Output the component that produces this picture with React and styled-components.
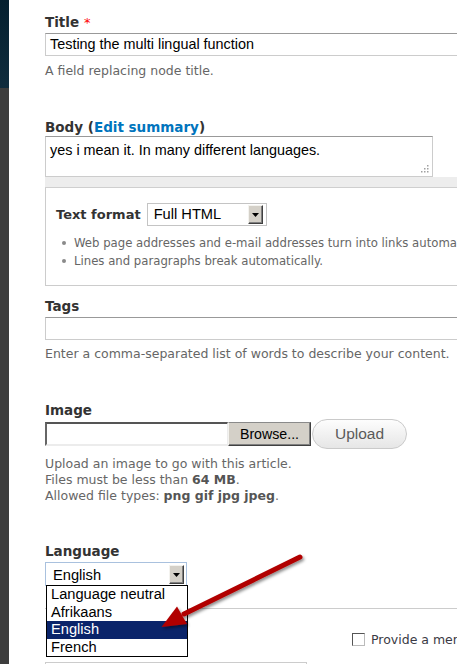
import React from 'react';
import styled, { createGlobalStyle } from 'styled-components';

const GlobalStyle = createGlobalStyle`
  html, body {
    margin: 0;
    padding: 0;
    overflow: hidden;
    background: #fff;
  }
  * { box-sizing: border-box; }
`;

const Page = styled.div`
  position: relative;
  display: flex;
  width: 457px;
  height: 664px;
  overflow: hidden;
  background: #fff;
  font-family: "DejaVu Sans", Verdana, sans-serif;
  color: #333;
`;

const SideBar = styled.div`
  width: 9px;
  flex: none;
  background: linear-gradient(#05202f, #102c3d 88px, #3d3d3d 88px);
`;

const Main = styled.div`
  flex: 1;
  min-width: 0;
  padding-left: 36px;
  overflow: hidden;
`;

const FormItem = styled.div`
  position: relative;
  margin-top: ${(p) => p.$top}px;
`;

const Label = styled.div`
  font-weight: bold;
  font-size: 13.5px;
  line-height: 16px;
  color: #333;
  margin-bottom: ${(p) => p.$gap}px;
  a { color: #0074bd; text-decoration: none; }
`;

const Required = styled.span`
  color: #f00;
  font-weight: normal;
  font-size: 13px;
  margin-left: 5px;
`;

const TextInput = styled.div`
  width: 440px;
  height: 23px;
  padding: 0 4px;
  border: 1px solid #ccc;
  border-top-color: #999;
  font-family: "Liberation Sans", Arial, sans-serif;
  font-size: 14.4px;
  line-height: 21px;
  color: #000;
  white-space: nowrap;
`;

const TextArea = styled.div`
  position: relative;
  width: 388px;
  height: 41px;
  padding: 4px 4px;
  border: 1px solid #ccc;
  border-top-color: #999;
  font-family: "Liberation Sans", Arial, sans-serif;
  font-size: 14.4px;
  line-height: 18px;
  color: #000;
`;

const Grip = styled.svg`
  position: absolute;
  right: 3px;
  bottom: 3px;
`;

const GrayBar = styled.div`
  width: 440px;
  height: 11px;
  background: #ededed;
  border-bottom: 1px solid #cfcfcf;
`;

const FilterBox = styled.div`
  width: 440px;
  padding: 15px 10px 15px 10px;
  border: 1px solid #ccc;
  border-top: none;
`;

const FormatRow = styled.div`
  display: flex;
  align-items: center;
  gap: 6px;
  height: 23px;
`;

const SmallLabel = styled.span`
  font-weight: bold;
  font-size: 13px;
  color: #333;
`;

const Select = styled.div`
  position: relative;
  display: flex;
  align-items: flex-start;
  width: ${(p) => p.$width}px;
  height: ${(p) => p.$height}px;
  border: 1px solid ${(p) => p.$border};
  background: #fff;
  padding: ${(p) => p.$pad};
  font-family: "Liberation Sans", Arial, sans-serif;
  font-size: 14.67px;
  color: #000;
`;

const SelectValue = styled.div`
  flex: 1;
  padding-left: ${(p) => p.$indent}px;
  line-height: ${(p) => p.$line}px;
  white-space: nowrap;
`;

const DropButton = styled.div`
  width: 15px;
  height: 19px;
  flex: none;
  display: flex;
  align-items: center;
  justify-content: center;
  background: #d4d0c8;
  border: 1px solid;
  border-color: #f4f3ef #404040 #404040 #f4f3ef;
  box-shadow: inset -1px -1px 0 #808080;
`;

const Guidelines = styled.ul`
  list-style: none;
  margin: 8px 0 0 0;
  padding: 0;
  font-size: 11.7px;
  line-height: 18px;
  color: #666;
  white-space: nowrap;
`;

const Guideline = styled.li`
  position: relative;
  padding-left: 18px;
  &::before {
    content: '';
    position: absolute;
    left: 6px;
    top: 7px;
    width: 4px;
    height: 4px;
    border-radius: 50%;
    background: #8a8a8a;
  }
`;

const Description = styled.div`
  margin-top: ${(p) => p.$top}px;
  font-size: 12.5px;
  line-height: 16px;
  color: #666;
  white-space: nowrap;
  b { color: #555; }
`;

const UploadRow = styled.div`
  display: flex;
  align-items: center;
  height: 30px;
  margin-top: 1px;
`;

const FileBox = styled.div`
  width: 183px;
  height: 24px;
  border-top: 2px solid #555;
  border-left: 2px solid #666;
  border-bottom: 2px solid #ececec;
  border-right: 1px solid #ececec;
  background: #fff;
`;

const BrowseButton = styled.div`
  width: 83px;
  height: 24px;
  display: flex;
  align-items: center;
  justify-content: center;
  background: #d4d0c8;
  border: 1px solid;
  border-color: #8a8a8a #404040 #404040 #f4f3ef;
  box-shadow: inset -1px -1px 0 #808080;
  font-family: "Liberation Sans", Arial, sans-serif;
  font-size: 14.2px;
  color: #000;
`;

const UploadButton = styled.div`
  width: 95px;
  height: 30px;
  margin-left: 1px;
  display: flex;
  align-items: center;
  justify-content: center;
  border: 1px solid #cacaca;
  border-radius: 15px;
  background: linear-gradient(#fdfdfd, #e6e6e6);
  font-family: "Liberation Sans", Arial, sans-serif;
  font-size: 15.5px;
  color: #5a5a5a;
`;

const OptionList = styled.div`
  position: absolute;
  left: 0;
  top: 100%;
  z-index: 2;
  width: 142px;
  border: 1px solid #000;
  background: #fff;
  font-family: "Liberation Sans", Arial, sans-serif;
  font-size: 14.67px;
  color: #000;
`;

const Option = styled.div`
  height: 17.5px;
  line-height: 17.5px;
  padding-left: 4px;
  white-space: nowrap;
  background: ${(p) => (p.$active ? '#0a246a' : 'transparent')};
  color: ${(p) => (p.$active ? '#fff' : '#000')};
`;

const BottomSection = styled.div`
  margin-top: 22px;
  width: 440px;
  height: 80px;
  border-top: 1px solid #ccc;
  display: grid;
  grid-template-columns: 262px 1fr;
  column-gap: 45px;
  align-items: start;
`;

const TabsBox = styled.div`
  margin-top: 53px;
  height: 30px;
  border: 1px solid #ccc;
  border-bottom: none;
`;

const CheckRow = styled.div`
  margin-top: 23px;
  display: flex;
  align-items: center;
  gap: 6px;
  font-size: 12.5px;
  color: #3a3a44;
  white-space: nowrap;
`;

const CheckBox = styled.div`
  width: 13px;
  height: 13px;
  flex: none;
  border: 1px solid #555;
  border-right-color: #bbb;
  border-bottom-color: #bbb;
  background: #fff;
`;

const ArrowLayer = styled.svg`
  position: absolute;
  left: 0;
  top: 0;
  pointer-events: none;
  z-index: 5;
`;

function DropArrow() {
  return (
    <svg width="7" height="4" viewBox="0 0 7 4">
      <path d="M0 0 H7 L3.5 4 Z" fill="#000" />
    </svg>
  );
}

export default function App() {
  return (
    <>
      <GlobalStyle />
      <Page>
        <SideBar />
        <Main>
          <FormItem $top={14}>
            <Label $gap={2}>Title<Required>*</Required></Label>
            <TextInput>Testing the multi lingual function</TextInput>
            <Description $top={7}>A field replacing node title.</Description>
          </FormItem>

          <FormItem $top={40}>
            <Label $gap={1}>Body (<a href="#">Edit summary</a>)</Label>
            <TextArea>
              yes i mean it. In many different languages.
              <Grip width="9" height="9" viewBox="0 0 9 9">
                <g fill="#a0a0a0">
                  <rect x="7" y="1" width="1.5" height="1.5" />
                  <rect x="4" y="4" width="1.5" height="1.5" />
                  <rect x="7" y="4" width="1.5" height="1.5" />
                  <rect x="1" y="7" width="1.5" height="1.5" />
                  <rect x="4" y="7" width="1.5" height="1.5" />
                  <rect x="7" y="7" width="1.5" height="1.5" />
                </g>
              </Grip>
            </TextArea>
            <GrayBar />
            <FilterBox>
              <FormatRow>
                <SmallLabel>Text format</SmallLabel>
                <Select $width={120} $height={23} $border="#c4c4c4" $pad="1px 3px 0 0">
                  <SelectValue $indent={6} $line={19}>Full HTML</SelectValue>
                  <DropButton><DropArrow /></DropButton>
                </Select>
              </FormatRow>
              <Guidelines>
                <Guideline>Web page addresses and e-mail addresses turn into links automatically.</Guideline>
                <Guideline>Lines and paragraphs break automatically.</Guideline>
              </Guidelines>
            </FilterBox>
          </FormItem>

          <FormItem $top={12}>
            <Label $gap={3}>Tags</Label>
            <TextInput />
            <Description $top={6}>Enter a comma-separated list of words to describe your content.</Description>
          </FormItem>

          <FormItem $top={40}>
            <Label $gap={0}>Image</Label>
            <UploadRow>
              <FileBox />
              <BrowseButton>Browse...</BrowseButton>
              <UploadButton>Upload</UploadButton>
            </UploadRow>
            <Description $top={7}>
              Upload an image to go with this article.<br />
              Files must be less than <b>64 MB</b>.<br />
              Allowed file types: <b>png gif jpg jpeg</b>.
            </Description>
          </FormItem>

          <FormItem $top={39}>
            <Label $gap={3}>Language</Label>
            <Select $width={142} $height={24} $border="#a9c1de" $pad="2px 2px 0 0">
              <SelectValue $indent={7} $line={20}>English</SelectValue>
              <DropButton><DropArrow /></DropButton>
              <OptionList>
                <Option>Language neutral</Option>
                <Option>Afrikaans</Option>
                <Option $active>English</Option>
                <Option>French</Option>
              </OptionList>
            </Select>
          </FormItem>

          <BottomSection>
            <TabsBox />
            <CheckRow>
              <CheckBox />
              Provide a menu link
            </CheckRow>
          </BottomSection>
        </Main>

        <ArrowLayer width="457" height="664" viewBox="0 0 457 664">
          <defs>
            <filter id="shadow" x="-20%" y="-20%" width="140%" height="140%">
              <feDropShadow dx="1.5" dy="2" stdDeviation="1.5" floodColor="#000" floodOpacity="0.45" />
            </filter>
          </defs>
          <g filter="url(#shadow)">
            <line x1="300" y1="557" x2="184" y2="614" stroke="#b10000" strokeWidth="5" strokeLinecap="round" />
            <polygon points="161.5,627 177,606.5 187,624" fill="#b10000" />
          </g>
        </ArrowLayer>
      </Page>
    </>
  );
}
